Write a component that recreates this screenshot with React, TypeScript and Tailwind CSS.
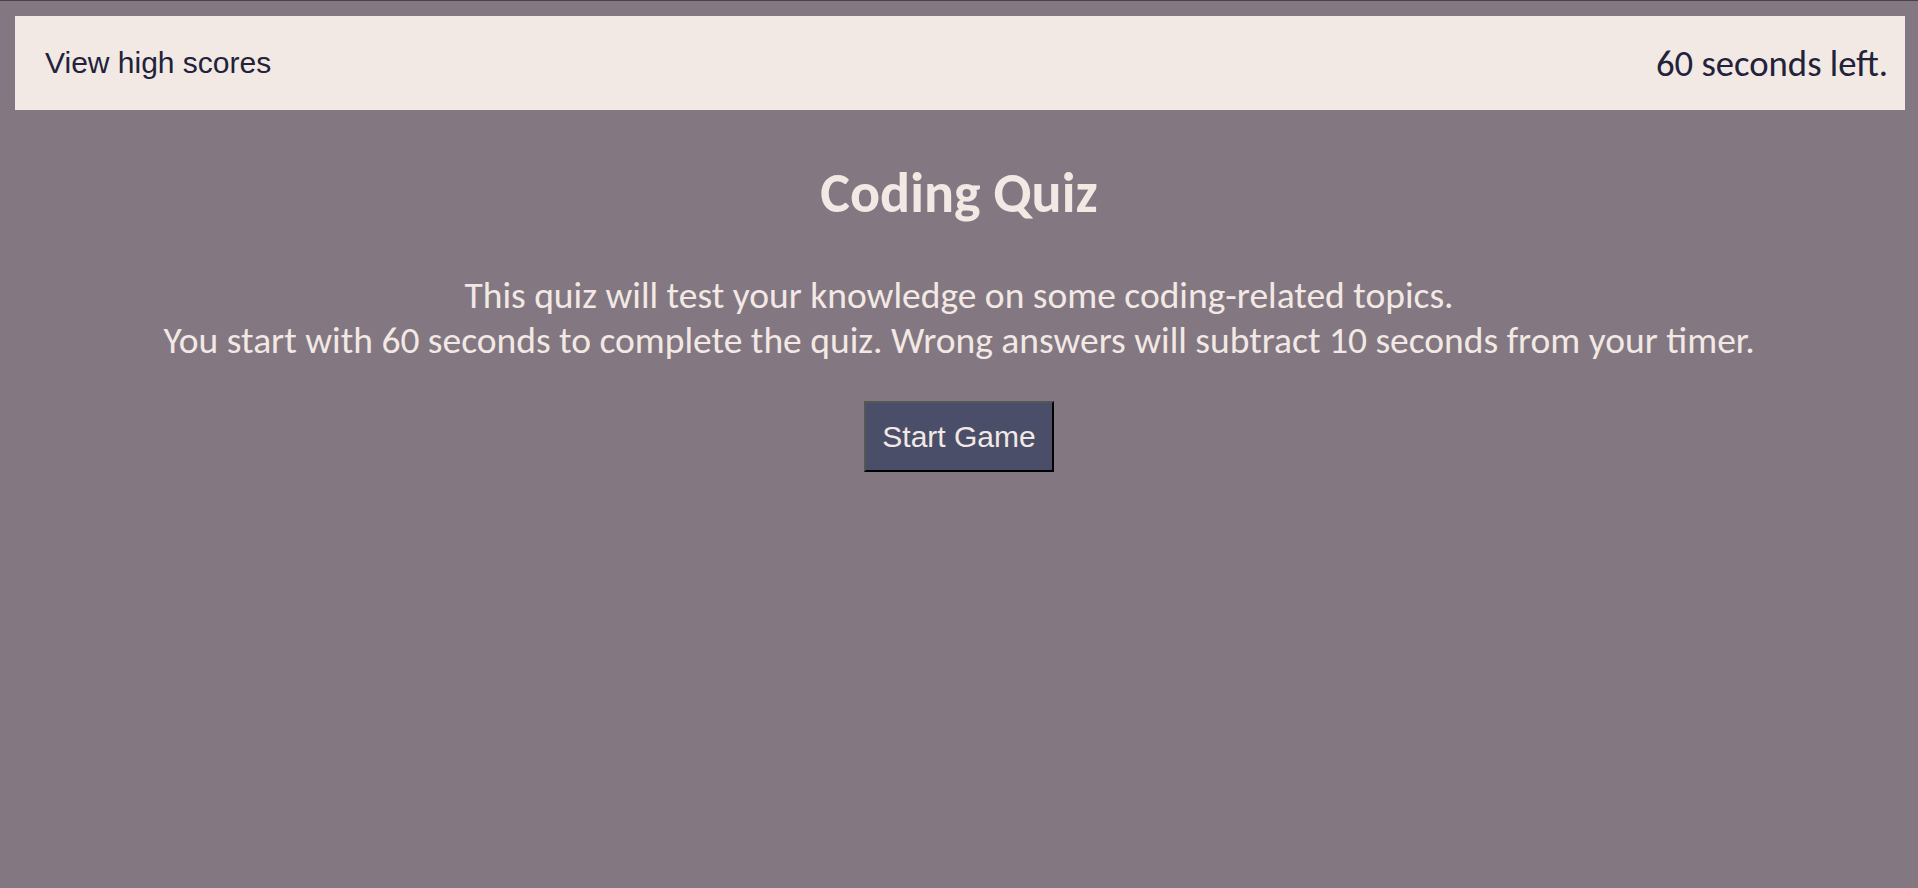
import React, { useState } from "react";

const calibri = { fontFamily: "Calibri, Carlito, Lato, sans-serif" };

const App = () => {
  const [secondsLeft] = useState(60);

  return (
    <div className="min-h-screen bg-[#837782] border-t border-[#454545] pt-[15px]">
      <header className="ml-[15px] mr-[13px] h-[94px] bg-[#f2e9e4] flex justify-between items-center pl-[30px] pr-[17px] text-[#22223b]">
        <a
          href="#"
          className="text-[30px] pb-[2px] font-['Liberation_Sans',Arial,sans-serif]"
        >
          View high scores
        </a>
        <p className="text-[36.7px] pt-[2px]" style={calibri}>
          {secondsLeft} seconds left.
        </p>
      </header>

      <main className="flex flex-col items-center text-center text-[#f2e9e4]">
        <h1
          className="mt-[53px] text-[56px] leading-[60px] font-bold"
          style={calibri}
        >
          Coding Quiz
        </h1>
        <p className="mt-[50px] text-[37.5px] leading-[45px]" style={calibri}>
          This quiz will test your knowledge on some coding-related topics.
          <br />
          You start with 60 seconds to complete the quiz. Wrong answers will
          subtract 10 seconds from your timer.
        </p>
        <button
          type="button"
          className="mt-[38px] bg-[#4a4e69] text-[#f2e9e4] text-[30px] leading-[35px] px-[16px] py-[16px] border-2 border-t-[#555555] border-l-[#555555] border-r-black border-b-black font-['Liberation_Sans',Arial,sans-serif]"
        >
          Start Game
        </button>
      </main>
    </div>
  );
};

export default App;
